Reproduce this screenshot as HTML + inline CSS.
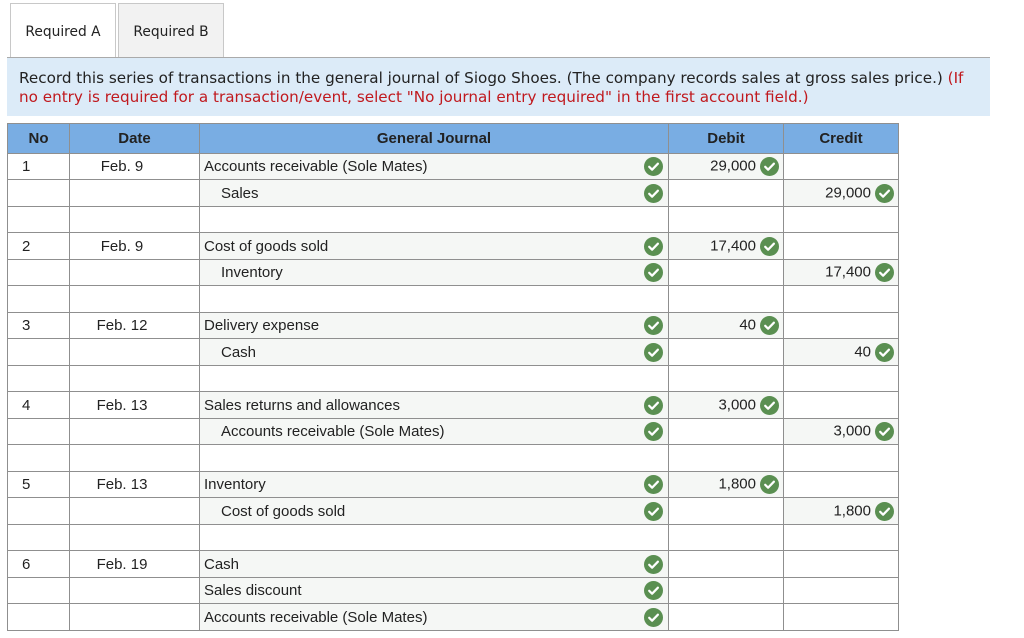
<!DOCTYPE html>
<html><head><meta charset="utf-8"><style>
body{margin:0;width:1024px;height:638px;background:#fff;font-family:"Liberation Sans",Arial,sans-serif;position:relative;overflow:hidden}
.tab{position:absolute;top:3px;height:54px;width:106px;border:1px solid #c8c8c8;border-bottom:none;font-family:"DejaVu Sans",Verdana,sans-serif;font-size:13.8px;line-height:56px;text-align:center;color:#222;box-sizing:border-box}
.line{position:absolute;left:7px;top:57px;width:983px;height:1px;background:#aaa}
.box{position:absolute;left:7px;top:58px;width:983px;height:58px;background:#dcebf8;box-sizing:border-box;padding:11px 12px;font-family:"DejaVu Sans",Verdana,sans-serif;font-size:15.2px;line-height:19px;color:#222}
.red{color:#c0191e}
table{position:absolute;left:7px;top:123px;border-collapse:collapse;font-size:15px;color:#222;table-layout:fixed}
td,th{border:1px solid #8f8f8f;padding:0 4px;white-space:nowrap;overflow:hidden}
th{background:#79ade3;height:29px;font-weight:bold;font-size:15px}
tr.a td{height:25px}tr.b td{height:26px}
td.n{padding-left:14px}
.c{text-align:center;padding-right:29px}.r{text-align:right}
.f{background:#f5f7f5}
.ind{padding-left:21px}
.ck{display:inline-block;width:19px;height:19px;vertical-align:middle;margin-left:4px}
.acc{position:relative}
.acc svg{position:absolute;right:5px;top:50%;margin-top:-9.5px}
</style></head><body>
<div class="tab" style="left:10px;background:#fff;height:55px">Required A</div>
<div class="tab" style="left:118px;background:#f2f2f2">Required B</div>
<div class="line"></div>
<div class="box">Record this series of transactions in the general journal of Siogo Shoes. (The company records sales at gross sales price.) <span class="red">(If no entry is required for a transaction/event, select "No journal entry required" in the first account field.)</span></div>
<svg width="0" height="0" style="position:absolute"><defs><symbol id="k" viewBox="0 0 19 19"><circle cx="9.5" cy="9.5" r="9.5" fill="#5a8f51"/><path d="M5.2 9.8l2.9 2.9 5.8-6" stroke="#fff" stroke-width="2.2" fill="none" stroke-linecap="round" stroke-linejoin="round"/></symbol></defs></svg>
<table>
<colgroup><col style="width:62px"><col style="width:130px"><col style="width:469px"><col style="width:115px"><col style="width:115px"></colgroup>
<tr><th>No</th><th>Date</th><th>General Journal</th><th>Debit</th><th>Credit</th></tr>
<tr class="a"><td class="n">1</td><td class="c">Feb. 9</td><td class="f acc">Accounts receivable (Sole Mates)<svg class="ck" width="19" height="19"><use href="#k"/></svg></td><td class="f r">29,000<svg class="ck"><use href="#k"/></svg></td><td></td></tr>
<tr class="b"><td></td><td></td><td class="f acc ind">Sales<svg class="ck" width="19" height="19"><use href="#k"/></svg></td><td></td><td class="f r">29,000<svg class="ck"><use href="#k"/></svg></td></tr>
<tr class="a"><td></td><td></td><td></td><td></td><td></td></tr>
<tr class="b"><td class="n">2</td><td class="c">Feb. 9</td><td class="f acc">Cost of goods sold<svg class="ck" width="19" height="19"><use href="#k"/></svg></td><td class="f r">17,400<svg class="ck"><use href="#k"/></svg></td><td></td></tr>
<tr class="a"><td></td><td></td><td class="f acc ind">Inventory<svg class="ck" width="19" height="19"><use href="#k"/></svg></td><td></td><td class="f r">17,400<svg class="ck"><use href="#k"/></svg></td></tr>
<tr class="b"><td></td><td></td><td></td><td></td><td></td></tr>
<tr class="a"><td class="n">3</td><td class="c">Feb. 12</td><td class="f acc">Delivery expense<svg class="ck" width="19" height="19"><use href="#k"/></svg></td><td class="f r">40<svg class="ck"><use href="#k"/></svg></td><td></td></tr>
<tr class="b"><td></td><td></td><td class="f acc ind">Cash<svg class="ck" width="19" height="19"><use href="#k"/></svg></td><td></td><td class="f r">40<svg class="ck"><use href="#k"/></svg></td></tr>
<tr class="a"><td></td><td></td><td></td><td></td><td></td></tr>
<tr class="b"><td class="n">4</td><td class="c">Feb. 13</td><td class="f acc">Sales returns and allowances<svg class="ck" width="19" height="19"><use href="#k"/></svg></td><td class="f r">3,000<svg class="ck"><use href="#k"/></svg></td><td></td></tr>
<tr class="a"><td></td><td></td><td class="f acc ind">Accounts receivable (Sole Mates)<svg class="ck" width="19" height="19"><use href="#k"/></svg></td><td></td><td class="f r">3,000<svg class="ck"><use href="#k"/></svg></td></tr>
<tr class="b"><td></td><td></td><td></td><td></td><td></td></tr>
<tr class="a"><td class="n">5</td><td class="c">Feb. 13</td><td class="f acc">Inventory<svg class="ck" width="19" height="19"><use href="#k"/></svg></td><td class="f r">1,800<svg class="ck"><use href="#k"/></svg></td><td></td></tr>
<tr class="b"><td></td><td></td><td class="f acc ind">Cost of goods sold<svg class="ck" width="19" height="19"><use href="#k"/></svg></td><td></td><td class="f r">1,800<svg class="ck"><use href="#k"/></svg></td></tr>
<tr class="a"><td></td><td></td><td></td><td></td><td></td></tr>
<tr class="b"><td class="n">6</td><td class="c">Feb. 19</td><td class="f acc">Cash<svg class="ck" width="19" height="19"><use href="#k"/></svg></td><td></td><td></td></tr>
<tr class="a"><td></td><td></td><td class="f acc">Sales discount<svg class="ck" width="19" height="19"><use href="#k"/></svg></td><td></td><td></td></tr>
<tr class="b"><td></td><td></td><td class="f acc">Accounts receivable (Sole Mates)<svg class="ck" width="19" height="19"><use href="#k"/></svg></td><td></td><td></td></tr>
</table>
</body></html>
